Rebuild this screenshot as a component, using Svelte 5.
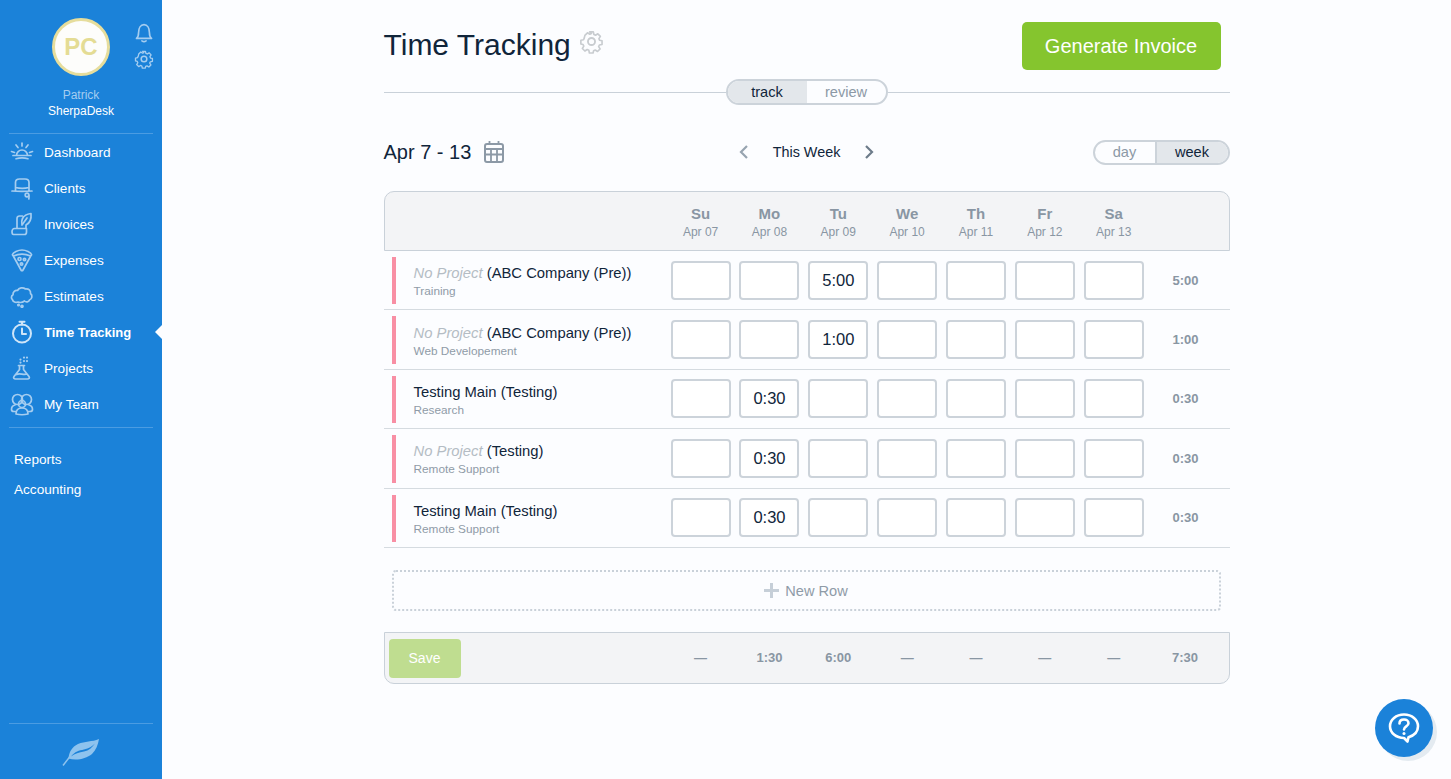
<script>
  const navItems = [
    { label: 'Dashboard', icon: 'sun' },
    { label: 'Clients', icon: 'hat' },
    { label: 'Invoices', icon: 'scroll' },
    { label: 'Expenses', icon: 'pizza' },
    { label: 'Estimates', icon: 'cloud' },
    { label: 'Time Tracking', icon: 'watch', active: true },
    { label: 'Projects', icon: 'flask' },
    { label: 'My Team', icon: 'team' }
  ];

  const days = [
    ['Su', 'Apr 07'], ['Mo', 'Apr 08'], ['Tu', 'Apr 09'], ['We', 'Apr 10'],
    ['Th', 'Apr 11'], ['Fr', 'Apr 12'], ['Sa', 'Apr 13']
  ];

  const rows = [
    { project: null, client: '(ABC Company (Pre))', task: 'Training', day: 2, time: '5:00' },
    { project: null, client: '(ABC Company (Pre))', task: 'Web Developement', day: 2, time: '1:00' },
    { project: 'Testing Main', client: '(Testing)', task: 'Research', day: 1, time: '0:30' },
    { project: null, client: '(Testing)', task: 'Remote Support', day: 1, time: '0:30' },
    { project: 'Testing Main', client: '(Testing)', task: 'Remote Support', day: 1, time: '0:30' }
  ];

  const totals = ['—', '1:30', '6:00', '—', '—', '—', '—'];
</script>

{#snippet gear(size)}
  <svg width={size} height={size} viewBox="0 0 24 24" fill="none" stroke="currentColor" stroke-width="1.8" stroke-linejoin="round">
    <circle cx="12" cy="12" r="3.4" />
    <path d="M10 2.500h4l.6 2.900 1.800.8 2.500-1.600 2.800 2.800-1.600 2.500.8 1.800 2.600.5v4l-2.900.6-.8 1.800 1.600 2.500-2.800 2.800-2.500-1.600-1.800.8-.6 2.400h-4l-.6-2.900-1.800-.8-2.500 1.600-2.800-2.800 1.600-2.500-.8-1.800-2.400-.6v-4l2.900-.6.8-1.800L4.800 6.300l2.800-2.800 2.500 1.600 1.800-.8z" transform="translate(12 12) scale(.88) translate(-12 -13)" />
  </svg>
{/snippet}

{#snippet navIcon(name)}
  <svg class="nav-icon" width="24" height="24" viewBox="0 0 24 24" fill="none" stroke="currentColor" stroke-width="1.7" stroke-linecap="round" stroke-linejoin="round">
    {#if name === 'sun'}
      <path d="M6.500 15.500a5.500 5.500 0 0 1 11 0M3 15.500h18M6 18.700c4-1.200 8-1.200 12 0M12 3v3M6 5l2 2.500M18 5l-2 2.500M1.500 11.500l3 1M22.500 11.500l-3 1" />
    {:else if name === 'hat'}
      <path d="M5.500 14.500V6.500C5.500 4 7 3 9.500 3h5.500c2.500 0 4 1 4 3.500v8M2 15c6 .5 14 .5 20 0M5.500 11.500c4 1 9.500 1 13.500 0" />
      <circle cx="17" cy="19" r="1.800" />
      <path d="M18.800 19c.3 1.500.3 2.500 0 4" />
    {:else if name === 'scroll'}
      <path d="M7 16.500V6.500c0-1.500 1-2.500 2.500-2.500h3M21 1.500c.5 5-1 9.500-5 11.500v3.500M21 1.500c-4 .5-7 2-8.500 5-1 2-1 4.500-.5 6.500M3.500 22.500h11c1.500 0 2-1 2-2.500v-3.500H4.500c-1.500 0-2.500 1.500-2.500 3s.5 3 1.500 3zM12 13l5-7" />
    {:else if name === 'pizza'}
      <path d="M2.500 6.500C3 4.500 8 2 12 2s9 2.500 9.500 4.500c.2 1-.8 1.500-.8 1.500L13 22c-.5 1-1.500 1-2 0L3.300 8s-1-.5-.8-1.500zM3.500 8c5.500-2.500 11.500-2.500 17 0" />
      <circle cx="9.500" cy="11" r="1.500" />
      <circle cx="14.500" cy="11.500" r="1.200" />
      <circle cx="11.500" cy="16" r="1.200" />
    {:else if name === 'cloud'}
      <path d="M8 18c-2.500 1-5 0-5.500-2.300C1 14.500 1 12 3 10.800 2.800 8 5 6 7.500 6.500 9 3.500 13 3 15.500 5c3-.5 5.500 1.500 5 4.500 2.500 2 1.500 5.500-1 6.500-.5 2-3.500 2.500-5 1-2 1.500-4.500 1.800-6.500 1z" />
      <circle cx="8.500" cy="21" r=".7" />
      <circle cx="12" cy="22.300" r="1" />
    {:else if name === 'watch'}
      <circle cx="12" cy="13.500" r="9" stroke-width="2" />
      <path d="M12 8.500v5.500h4M9.500 1.800h5M12 1.800v3" stroke-width="2" />
    {:else if name === 'flask'}
      <path d="M8.500 9.500h6M9.500 9.500v4L4 20.500c-1 1.500 0 2.500 1.500 2.500h12c1.500 0 2.500-1 1.500-2.500l-5.500-7v-4M6.500 18.500c3-1.800 7 .8 10.500-.5" />
      <path d="M10.500 3.500v.1M14 1.500v.1M17 1.500v.1M14 5v.1M17 5v.1M10.500 6.500v.1" stroke-width="2.200" />
    {:else}
      <circle cx="7.500" cy="7.500" r="5" />
      <circle cx="16.500" cy="7.500" r="5" />
      <circle cx="12" cy="12" r="3.500" />
      <path d="M5 13c-2.500.5-3.500 2.500-3.500 4.500 0 1.500 1 2 2.500 2h2M19 13c2.500.5 3.500 2.500 3.500 4.500 0 1.500-1 2-2.500 2h-2M6 22c0-3.500 2-6 6-6s6 2.500 6 6c-4 1-8 1-12 0z" />
    {/if}
  </svg>
{/snippet}

<div class="layout">
  <aside class="sidebar">
    <div class="profile">
      <div class="avatar-row">
        <div class="avatar">PC</div>
        <div class="quick-icons">
          <svg width="20" height="20" viewBox="0 0 24 24" fill="none" stroke="currentColor" stroke-width="2" stroke-linejoin="round" stroke-linecap="round">
            <path d="M3 18.500c2-1.500 2.500-3.500 2.500-7C5.500 6 8 2 12 2s6.500 4 6.500 9.500c0 3.500.5 5.500 2.500 7zM9.500 21.500c1.500 1 3.500 1 5 0" />
          </svg>
          {@render gear(20)}
        </div>
      </div>
      <div class="first-name">Patrick</div>
      <div class="company">SherpaDesk</div>
    </div>

    <nav class="nav">
      {#each navItems as item}
        <div class="nav-item" class:active={item.active}>
          {@render navIcon(item.icon)}
          <span>{item.label}</span>
        </div>
      {/each}
    </nav>

    <div class="sub-nav">
      <div class="sub-item">Reports</div>
      <div class="sub-item">Accounting</div>
    </div>

    <div class="side-foot">
      <svg width="38" height="28" viewBox="0 0 38 28">
        <path class="leaf" d="M37 1c-7 3-14 2-21 5C10 9 7 14 6.500 20.500 14 23 24 21 30 16c4-4 6-9 7-15z" />
        <path class="vein" d="M9 18.500c4-5 8-6 13-7 5-1 8-3 11-6-3 4-6 7-11 8-5 1-9 2-13 5z" />
        <path class="stem" d="M1 27.500l7-9" />
      </svg>
    </div>
  </aside>

  <main class="main">
    <div class="content">
      <header class="top">
        <h1>Time Tracking</h1>
        <span class="title-gear">{@render gear(25)}</span>
        <button class="invoice-btn">Generate Invoice</button>
      </header>

      <div class="tabs-line">
        <div class="rule"></div>
        <div class="toggle mode">
          <span class="on">track</span>
          <span>review</span>
        </div>
        <div class="rule"></div>
      </div>

      <div class="week-bar">
        <div class="range">
          <span>Apr 7 - 13</span>
          <svg width="22" height="24" viewBox="0 0 22 24" fill="none" stroke="#8c99a6" stroke-width="2">
            <rect x="2" y="4" width="18" height="18" rx="2" />
            <path d="M2 9h18M2 14.500h18M8 9v13M14 9v13M6.500 1v4M15.500 1v4" stroke-width="1.800" />
          </svg>
        </div>
        <div class="pager">
          <svg width="12" height="16" viewBox="0 0 12 16" fill="none" stroke="#97a4b0" stroke-width="2.200"><path d="M9 2 3 8l6 6" /></svg>
          <span>This Week</span>
          <svg width="12" height="16" viewBox="0 0 12 16" fill="none" stroke="#6d7c8a" stroke-width="2.200"><path d="m3 2 6 6-6 6" /></svg>
        </div>
        <div class="toggle span">
          <span>day</span>
          <span class="on">week</span>
        </div>
      </div>

      <section class="sheet">
        <div class="sheet-head grid">
          <div></div>
          {#each days as d}
            <div class="day">
              <b>{d[0]}</b>
              <small>{d[1]}</small>
            </div>
          {/each}
          <div></div>
        </div>

        {#each rows as row}
          <div class="row grid">
            <div class="who">
              <div class="name">
                {#if row.project}{row.project}{:else}<em>No Project</em>{/if}
                {row.client}
              </div>
              <div class="task">{row.task}</div>
            </div>
            {#each days as d, i}
              <div class="cell">{i === row.day ? row.time : ''}</div>
            {/each}
            <div class="sum">{row.time}</div>
          </div>
        {/each}
      </section>

      <div class="new-row">
        <svg width="15" height="15" viewBox="0 0 15 15"><path d="M7.500 0v15M0 7.500h15" stroke="#c6cfd8" stroke-width="3" /></svg>
        <span>New Row</span>
      </div>

      <footer class="sheet-foot grid">
        <div><button class="save-btn">Save</button></div>
        {#each totals as t}
          <div class="sum">{t}</div>
        {/each}
        <div class="sum">7:30</div>
      </footer>
    </div>
  </main>

  <button class="help" aria-label="Help">
    <svg width="34" height="34" viewBox="0 0 34 34" fill="none" stroke="#fff" stroke-width="2.600">
      <path d="M17 3.500C9 3.500 3 8.800 3 15.300S9 27 17 27l3.500 3.500 1-4.200c5.500-1.700 9.500-5.700 9.500-11C31 8.800 25 3.500 17 3.500z" stroke-linejoin="round" />
      <path d="M12.500 12.500c0-2.700 2-4 4.500-4s4.500 1.400 4.500 3.700c0 3.300-4.500 3-4.500 6.300" stroke-linecap="round" />
      <circle cx="17" cy="22.500" r="1.500" fill="#fff" stroke="none" />
    </svg>
  </button>
</div>

<style>
  :global(body) {
    background: #fcfdff;
    font-family: "Liberation Sans", Arial, sans-serif;
    color: #10253a;
  }

  .layout {
    display: flex;
    min-height: 100vh;
    position: relative;
  }

  /* sidebar */
  .sidebar {
    width: 162px;
    flex-shrink: 0;
    background: #1b82d9;
    color: #fff;
    display: flex;
    flex-direction: column;
    padding: 0 9px;
    box-sizing: border-box;
  }

  .profile {
    text-align: center;
    font-size: 12px;
    padding: 18px 0 15px;
    border-bottom: 1px solid #4b9ce2;
    line-height: 16px;
  }

  .avatar-row {
    display: flex;
    justify-content: center;
    position: relative;
    margin-bottom: 11px;
  }

  .avatar {
    width: 52px;
    height: 52px;
    border: 3px solid #e6dd9c;
    border-radius: 50%;
    background: #fdfdfb;
    color: #e4dc94;
    font-size: 24px;
    font-weight: bold;
    line-height: 52px;
  }

  .quick-icons {
    position: absolute;
    top: 5px;
    right: -1px;
    display: flex;
    flex-direction: column;
    gap: 6px;
    color: #a5cdf0;
  }

  .quick-icons svg { display: block; }

  .first-name { color: #a5cdf0; }

  .company { margin-bottom: -1px; }

  .nav {
    padding: 0 0 5px;
    border-bottom: 1px solid #4b9ce2;
  }

  .nav-item {
    height: 36px;
    display: flex;
    align-items: center;
    gap: 10px;
    font-size: 13.6px;
    position: relative;
    margin-left: 1px;
  }

  .nav-icon {
    color: #a5cdf0;
    flex-shrink: 0;
  }

  .nav-item.active {
    font-weight: bold;
    font-size: 13px;
  }

  .nav-item.active .nav-icon { color: #cfe5f8; }

  .nav-item.active::after {
    content: "";
    position: absolute;
    right: -9px;
    top: 11px;
    border: 7px solid transparent;
    border-right-color: #fcfdff;
    border-left-width: 0;
  }

  .sub-nav {
    padding: 17px 0 0 5px;
    font-size: 13.6px;
  }

  .sub-item {
    height: 30px;
    line-height: 30px;
  }

  .side-foot {
    margin-top: auto;
    border-top: 1px solid #4b9ce2;
    height: 55px;
    display: flex;
    justify-content: center;
    align-items: center;
  }

  .leaf { fill: #8ec3ee; }
  .vein { fill: #1b82d9; }
  .stem { stroke: #8ec3ee; stroke-width: 1.500; fill: none; }

  /* main */
  .main {
    flex: 1;
    min-width: 0;
  }

  .content {
    width: 846px;
    margin: 0 auto;
  }

  .top {
    display: flex;
    align-items: center;
    padding: 22px 9px 9px 0;
    box-sizing: border-box;
    height: 79px;
  }

  h1 {
    margin: 0;
    font-size: 30px;
    font-weight: normal;
    color: #10253a;
    line-height: 48px;
    position: relative;
    top: -1px;
  }

  .title-gear {
    color: #c8ccd0;
    margin-left: 8px;
    display: flex;
    position: relative;
    top: -5px;
  }

  .invoice-btn {
    margin-left: auto;
    width: 199px;
    height: 48px;
    background: #85c52e;
    color: #fff;
    border: 0;
    border-radius: 5px;
    font: 20px "Liberation Sans", Arial, sans-serif;
  }

  .tabs-line {
    display: flex;
    align-items: center;
  }

  .rule {
    flex: 1;
    height: 1px;
    background: #c9d1d9;
  }

  .toggle {
    display: flex;
    border: 2px solid #ccd3da;
    border-radius: 13px;
    overflow: hidden;
    font-size: 14.6px;
    color: #8c99a6;
    box-sizing: border-box;
  }

  .toggle span {
    display: flex;
    align-items: center;
    justify-content: center;
  }

  .toggle .on {
    background: #e3e7eb;
    color: #10253a;
  }

  .mode {
    width: 162px;
    height: 26px;
  }

  .mode span { width: 79px; flex: 1; }

  .span {
    width: 137px;
    height: 25px;
    justify-self: end;
  }

  .span span:first-child { width: 60px; border-right: 2px solid #ccd3da; }
  .span span:last-child { flex: 1; }

  .week-bar {
    display: grid;
    grid-template-columns: 1fr auto 1fr;
    align-items: center;
    margin-top: 34px;
    height: 26px;
  }

  .range {
    display: flex;
    align-items: center;
    gap: 12px;
    font-size: 20px;
    color: #10253a;
  }

  .pager {
    display: flex;
    align-items: center;
    gap: 23px;
    font-size: 14.4px;
    color: #10253a;
  }

  .grid {
    display: grid;
    grid-template-columns: 278.25px repeat(7, 60px) 1fr;
    column-gap: 8.850px;
  }

  .sheet { margin-top: 26px; }

  .sheet-head {
    height: 60px;
    background: #f3f4f6;
    border: 1px solid #c9d1d9;
    border-radius: 10px 10px 0 0;
    box-sizing: border-box;
    align-items: center;
    grid-template-columns: 277.25px repeat(7, 60px) 1fr;
  }

  .day {
    text-align: center;
    line-height: 17px;
    padding-top: 3px;
  }

  .day b {
    display: block;
    font-size: 15px;
    color: #8996a3;
  }

  .day small {
    display: block;
    font-size: 12px;
    color: #8996a3;
    margin-top: 2px;
  }

  .row {
    height: 59.400px;
    box-sizing: border-box;
    border-bottom: 1px solid #d5dbe0;
    align-items: center;
    position: relative;
  }

  .row::before {
    content: "";
    position: absolute;
    left: 8px;
    top: 6px;
    bottom: 5px;
    width: 4px;
    background: #f88fa4;
  }

  .who {
    padding: 3px 0 0 30px;
  }

  .name {
    font-size: 14.8px;
    line-height: 18px;
    color: #10253a;
    white-space: nowrap;
  }

  .name em { color: #b4bcc4; }

  .task {
    font-size: 11.800px;
    line-height: 16px;
    margin-top: 1px;
    color: #8f9ba7;
    white-space: nowrap;
  }

  .cell {
    height: 39px;
    box-sizing: border-box;
    border: 2px solid #ccd3da;
    border-radius: 4px;
    background: #fff;
    font-size: 16.500px;
    color: #10253a;
    display: flex;
    align-items: center;
    justify-content: center;
  }

  .sum {
    text-align: center;
    font-size: 13px;
    font-weight: bold;
    color: #8996a3;
  }

  .row .sum,
  .sheet-foot .sum:last-child {
    margin-left: -11px;
  }

  .new-row {
    margin: 22px 9px 0 8px;
    height: 41px;
    padding-top: 1px;
    box-sizing: border-box;
    border: 2px dotted #c9d1d9;
    border-radius: 4px;
    display: flex;
    align-items: center;
    justify-content: center;
    gap: 6px;
    font-size: 14.600px;
    color: #8f9ba7;
  }

  .sheet-foot {
    margin-top: 21px;
    height: 52px;
    background: #f3f4f6;
    border: 1px solid #c9d1d9;
    border-radius: 0 0 10px 10px;
    box-sizing: border-box;
    align-items: center;
    grid-template-columns: 277.25px repeat(7, 60px) 1fr;
  }

  .save-btn {
    display: block;
    margin: 1px 0 0 4px;
    width: 72px;
    height: 39px;
    background: #bfdd90;
    color: #fff;
    border: 0;
    border-radius: 4px;
    font: 14px "Liberation Sans", Arial, sans-serif;
  }

  .help {
    position: absolute;
    left: 1375px;
    top: 699px;
    width: 58px;
    height: 58px;
    border-radius: 50%;
    border: 0;
    padding: 0;
    background: #1b82d9;
    box-shadow: 4px 4px 0 #e4ebf1;
    display: flex;
    align-items: center;
    justify-content: center;
  }
</style>
